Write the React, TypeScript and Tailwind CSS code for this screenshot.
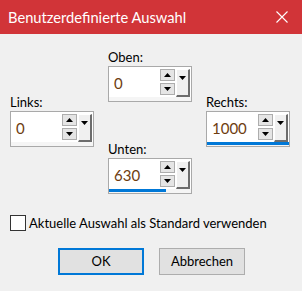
import React from 'react';

const font = { fontFamily: 'Lato, "Noto Sans", sans-serif' };

// small black triangle used on the spin / dropdown buttons
const Tri = ({ down }: { down?: boolean }) => (
  <svg width="7" height="4" viewBox="0 0 7 4" className="block">
    <path d={down ? 'M0 0h7L3.5 4z' : 'M0 4h7L3.5 0z'} fill="#000" />
  </svg>
);

const SpinBox: React.FC<{ value: string; bar?: string }> = ({ value, bar }) => (
  <div className="flex h-[36px] w-[84px] flex-col border border-[#a9a9a9] bg-white">
    <div className="flex h-[30px] items-start pt-[2px]">
      <span className="flex-1 pl-[5px] pt-[5px] text-[15px] leading-[18px] text-[#6e3d10]">{value}</span>
      <div className="flex w-[15px] flex-col gap-[2px]">
        <div className="flex h-[12px] items-center justify-center border border-[#adadad] bg-[#e5e5e5]">
          <Tri />
        </div>
        <div className="flex h-[12px] items-center justify-center border border-[#adadad] bg-[#e5e5e5]">
          <Tri down />
        </div>
      </div>
      <div className="ml-[1px] mr-[1px] flex h-[28px] w-[14px] justify-center border-t border-l border-r-2 border-b-2 border-t-white border-l-white border-r-[#6d6d6d] border-b-[#6d6d6d] bg-[#f0f0f0] pt-[6px]">
        <Tri down />
      </div>
    </div>
    <div className="h-[4px] bg-[#f5f5f5]">
      {bar && <div className={`h-[3px] bg-[#0078d7] ${bar}`} />}
    </div>
  </div>
);

export default function App() {
  return (
    <div className="h-[291px] w-[302px] overflow-hidden bg-[#f0f0f0] text-[13px] text-black" style={font}>
      <div className="flex h-[34px] items-center justify-between bg-[#d13438] pl-[8px] pr-[14px] text-white">
        <span className="text-[14.7px] leading-[20px]">Benutzerdefinierte Auswahl</span>
        <svg width="12" height="12" viewBox="0 0 12 12">
          <path d="M0.5 0.5l11 11M11.5 0.5l-11 11" stroke="#fff" strokeWidth="1.1" />
        </svg>
      </div>

      <div className="flex gap-[14px] pl-[10px] pt-[14px]">
        <div className="flex flex-col pt-[45px]">
          <span className="h-[18px] leading-[18px]">Links:</span>
          <SpinBox value="0" />
        </div>
        <div className="flex flex-col">
          <span className="h-[18px] leading-[18px]">Oben:</span>
          <SpinBox value="0" />
          <span className="mt-[38px] h-[18px] leading-[18px]">Unten:</span>
          <SpinBox value="630" bar="w-[57px]" />
        </div>
        <div className="flex flex-col pt-[45px]">
          <span className="h-[18px] leading-[18px]">Rechts:</span>
          <SpinBox value="1000" bar="w-full" />
        </div>
      </div>

      <label className="mt-[21px] flex items-center gap-[3px] pl-[10px]">
        <span className="h-[16px] w-[16px] border border-[#333] bg-white" />
        <span className="leading-[16px]">Aktuelle Auswahl als Standard verwenden</span>
      </label>

      <div className="mt-[17px] flex justify-center gap-[15px] pl-[1px]">
        <button className="h-[27px] w-[86px] border-2 border-[#0078d7] bg-[#e1e1e1] text-[13px]">OK</button>
        <button className="h-[27px] w-[86px] border border-[#adadad] bg-[#e1e1e1] text-[13px]">Abbrechen</button>
      </div>
    </div>
  );
}
